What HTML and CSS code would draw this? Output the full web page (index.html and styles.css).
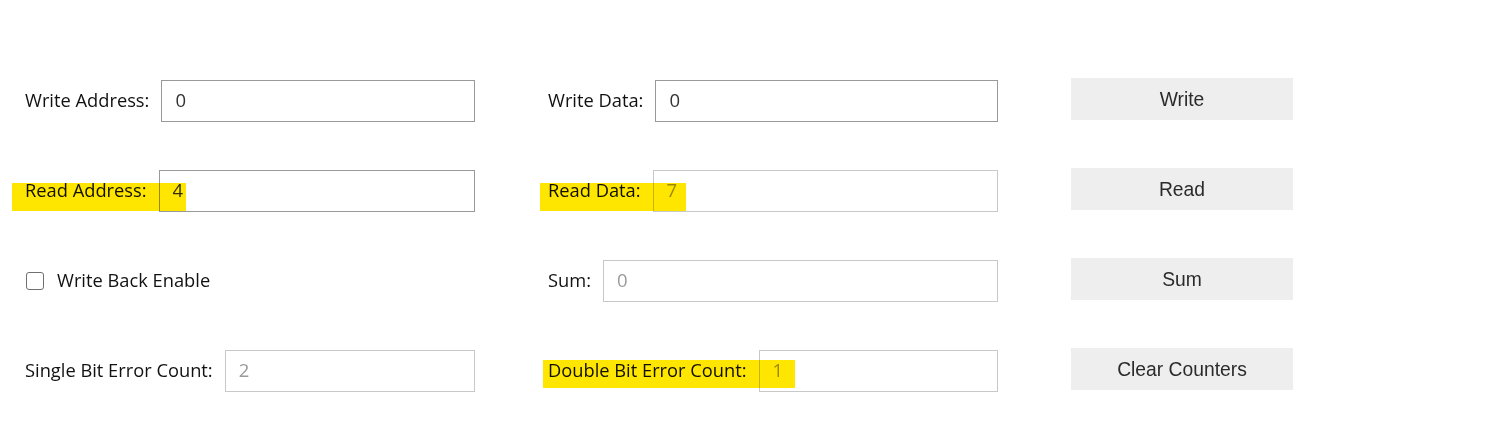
FILE: index.html
```html
<!DOCTYPE html>
<html lang="en">
<head>
<meta charset="utf-8">
<title>Memory ECC Test</title>
<link rel="stylesheet" href="styles.css">
</head>
<body>
<main class="panel">
  <div class="field">
    <label class="lbl" for="wa">Write Address:</label>
    <input id="wa" class="box" type="text" value="0">
  </div>
  <div class="field">
    <label class="lbl" for="wd">Write Data:</label>
    <input id="wd" class="box" type="text" value="0">
  </div>
  <div class="cell"><button class="btn" type="button">Write</button></div>

  <div class="field">
    <span class="hl hl-ra"></span>
    <label class="lbl" for="ra">Read Address:</label>
    <input id="ra" class="box" type="text" value="4">
  </div>
  <div class="field">
    <span class="hl hl-rd"></span>
    <label class="lbl" for="rd">Read Data:</label>
    <input id="rd" class="box" type="text" value="7" disabled>
  </div>
  <div class="cell"><button class="btn" type="button">Read</button></div>

  <div class="field">
    <input id="wb" class="check" type="checkbox">
    <label class="lbl" for="wb">Write Back Enable</label>
  </div>
  <div class="field">
    <label class="lbl" for="sum">Sum:</label>
    <input id="sum" class="box" type="text" value="0" disabled>
  </div>
  <div class="cell"><button class="btn" type="button">Sum</button></div>

  <div class="field">
    <label class="lbl" for="sbe">Single Bit Error Count:</label>
    <input id="sbe" class="box" type="text" value="2" disabled>
  </div>
  <div class="field">
    <span class="hl hl-db"></span>
    <label class="lbl" for="dbe">Double Bit Error Count:</label>
    <input id="dbe" class="box" type="text" value="1" disabled>
  </div>
  <div class="cell"><button class="btn" type="button">Clear Counters</button></div>
</main>
</body>
</html>
```
FILE: styles.css
```css
html, body {
  margin: 0;
  background: #ffffff;
}

body {
  font-family: "Open Sans", "Noto Sans", "Liberation Sans", sans-serif;
  color: #111111;
}

.panel {
  display: grid;
  grid-template-columns: 450px 450px 222px;
  grid-auto-rows: 44px;
  column-gap: 73px;
  row-gap: 46px;
  padding: 78px 0 0 25px;
}

.field {
  position: relative;
  display: flex;
  align-items: center;
  padding-top: 2px;
  box-sizing: border-box;
}

.lbl {
  font-size: 18.3px;
  white-space: nowrap;
  margin-right: 12px;
  margin-bottom: 4px;
  position: relative;
}

.box {
  flex: 1;
  min-width: 0;
  height: 42px;
  box-sizing: border-box;
  border: 1px solid #999999;
  border-radius: 0;
  padding: 0 12px 3px 13px;
  font-family: "Open Sans", "Noto Sans", "Liberation Sans", sans-serif;
  font-size: 18.5px;
  color: #333333;
  background: #ffffff;
  outline: none;
}

.box:disabled {
  border-color: #c8c8c8;
  color: #9a9a9a;
  background: #ffffff;
}

.check {
  appearance: none;
  -webkit-appearance: none;
  width: 18px;
  height: 18px;
  margin: 0 13px 0 1px;
  box-sizing: border-box;
  border: 1.5px solid #707070;
  border-radius: 3px;
  background: #ffffff;
}

.cell {
  display: flex;
}

.btn {
  width: 222px;
  height: 42px;
  border: none;
  background: #eeeeee;
  font-family: "Liberation Sans", Arial, sans-serif;
  font-size: 19.3px;
  color: #2b2b2b;
  padding: 2px 0 0 0;
}

/* yellow marker annotations laid over the fields */
.hl {
  position: absolute;
  background: #ffe600;
  mix-blend-mode: multiply;
  z-index: 2;
  pointer-events: none;
}

.hl-ra {
  left: -13px;
  top: 15px;
  width: 174px;
  height: 28px;
}

.hl-rd {
  left: -8px;
  top: 15px;
  width: 146px;
  height: 28px;
}

.hl-db {
  left: -5px;
  top: 12px;
  width: 252px;
  height: 28px;
}
```
